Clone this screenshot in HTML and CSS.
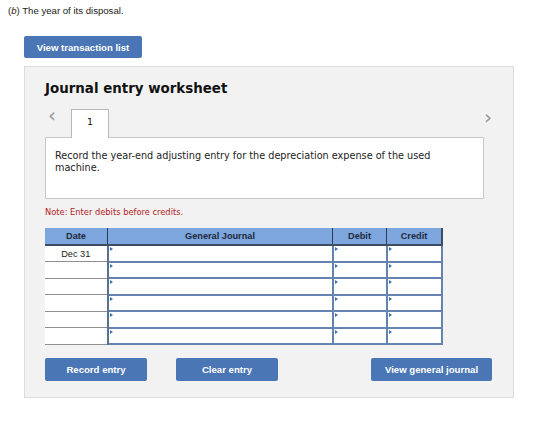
FILE: index.html
```html
<!DOCTYPE html>
<html lang="en">
<head>
    <meta charset="UTF-8">
    <title>Journal entry worksheet</title>
    <link rel="stylesheet" href="styles.css">
</head>
<body>
    <p class="question">(<i>b</i>) The year of its disposal.</p>
    <div class="page">
        <button class="btn btn-list">View transaction list</button>
        <div class="panel">
            <h1>Journal entry worksheet</h1>
            <div class="tabs">
                <span class="arrow">&lsaquo;</span>
                <div class="tab">1</div>
                <span class="arrow arrow-right">&rsaquo;</span>
            </div>
            <div class="instructions">
                Record the year-end adjusting entry for the depreciation expense of the used machine.
            </div>
            <p class="note">Note: Enter debits before credits.</p>
            <table class="journal">
                <thead>
                    <tr>
                        <th class="col-date">Date</th>
                        <th class="col-account">General Journal</th>
                        <th class="col-debit">Debit</th>
                        <th class="col-credit">Credit</th>
                    </tr>
                </thead>
                <tbody>
                    <tr><td class="date">Dec 31</td><td class="cell"></td><td class="cell"></td><td class="cell"></td></tr>
                    <tr><td class="date"></td><td class="cell"></td><td class="cell"></td><td class="cell"></td></tr>
                    <tr><td class="date"></td><td class="cell"></td><td class="cell"></td><td class="cell"></td></tr>
                    <tr><td class="date"></td><td class="cell"></td><td class="cell"></td><td class="cell"></td></tr>
                    <tr><td class="date"></td><td class="cell"></td><td class="cell"></td><td class="cell"></td></tr>
                    <tr><td class="date"></td><td class="cell"></td><td class="cell"></td><td class="cell"></td></tr>
                </tbody>
            </table>
            <div class="actions">
                <button class="btn btn-record">Record entry</button>
                <button class="btn btn-clear">Clear entry</button>
                <button class="btn btn-view">View general journal</button>
            </div>
        </div>
    </div>
</body>
</html>
```

FILE: styles.css
```css
body {
    margin: 0;
    padding: 0;
    font-family: "Liberation Sans", Arial, sans-serif;
    background: #ffffff;
    color: #222;
}
.question {
    margin: 0;
    padding: 5px 8px 0;
    font-size: 9.6px;
    line-height: 12px;
}
.page {
    padding: 19px 24px 0;
}
.btn {
    display: block;
    background-color: #4a76b5;
    color: #fff;
    border: none;
    border-radius: 2px;
    font-family: "Liberation Sans", Arial, sans-serif;
    font-weight: bold;
    font-size: 9.6px;
    height: 23px;
    padding: 0;
    cursor: pointer;
}
.btn-list {
    width: 118px;
    height: 22px;
}
.panel {
    margin-top: 8px;
    width: 490px;
    height: 332px;
    box-sizing: border-box;
    background: #f2f2f2;
    border: 1px solid #dcdcdc;
    padding: 0 20px;
}
h1 {
    margin: 14px 0 0;
    font-family: "DejaVu Sans", Verdana, sans-serif;
    font-size: 13.4px;
    font-weight: bold;
    color: #111;
    line-height: 16px;
}
.tabs {
    display: flex;
    align-items: flex-end;
    margin-top: 11px;
    height: 29px;
}
.arrow {
    font-family: "DejaVu Sans", sans-serif;
    color: #999;
    font-size: 20px;
    line-height: 20px;
    width: 26px;
    box-sizing: border-box;
    align-self: flex-start;
    padding-left: 3px;
    margin-top: -3px;
}
.arrow-right {
    margin-left: auto;
    margin-right: 1px;
    width: auto;
    margin-top: -1px;
}
.tab {
    width: 38px;
    height: 29px;
    box-sizing: border-box;
    background: #fff;
    border: 1px solid #b8b8b8;
    border-bottom: none;
    text-align: center;
    font-family: "DejaVu Sans", sans-serif;
    font-size: 9.5px;
    line-height: 24px;
    color: #111;
    position: relative;
    top: 1px;
}
.instructions {
    width: 439px;
    height: 62px;
    box-sizing: border-box;
    background: #fff;
    border: 1px solid #c8c8c8;
    padding: 12px 30px 0 9px;
    font-family: "DejaVu Sans", Verdana, sans-serif;
    font-size: 9.7px;
    line-height: 12px;
    color: #222;
}
.note {
    margin: 8px 0 0;
    font-family: "DejaVu Sans", Verdana, sans-serif;
    font-size: 8.3px;
    line-height: 11px;
    color: #b22222;
}
.journal {
    margin-top: 10px;
    border-collapse: collapse;
    font-size: 9.2px;
}
.journal th {
    background: #7da6de;
    height: 16px;
    padding: 0;
    font-weight: bold;
    color: #1e2a3a;
    text-align: center;
    border-bottom: 2px solid #3d4d66;
    border-right: 1px solid #2e3b4e;
}
.journal th:last-child {
    border-right: 2px solid #3d4d66;
}
.col-date { width: 62px; }
.col-account { width: 224px; }
.col-debit { width: 53px; }
.col-credit { width: 54px; }
.journal td {
    height: 14.5px;
    padding: 0;
}
.journal .date {
    background: #fff;
    text-align: center;
    color: #222;
    border-bottom: 1px solid #8f8f8f;
    border-right: 2px solid #5b6f8f;
}
.journal .cell {
    background: #fff;
    border: 2px solid #6583b0;
    border-top-width: 1px;
    position: relative;
}
.journal .cell::before {
    content: "";
    position: absolute;
    left: 1px;
    top: 1px;
    border-left: 3px solid #3f6fb8;
    border-top: 2px solid transparent;
    border-bottom: 2px solid transparent;
}
.actions {
    display: flex;
    margin-top: 13px;
}
.btn-record {
    width: 102px;
}
.btn-clear {
    width: 102px;
    margin-left: 29px;
}
.btn-view {
    width: 121px;
    margin-left: auto;
    margin-right: 1px;
}
```
